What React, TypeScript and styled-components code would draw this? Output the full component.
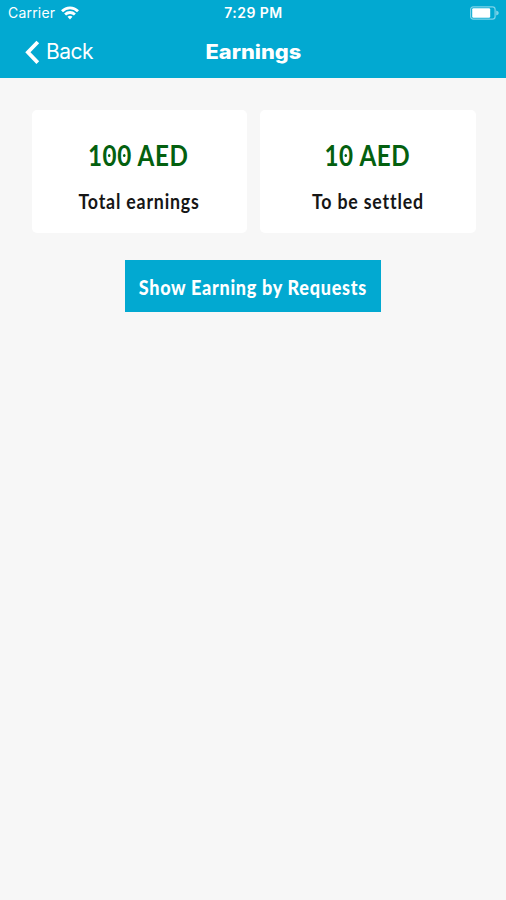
import React from "react";
import styled, { createGlobalStyle } from "styled-components";

const GlobalStyle = createGlobalStyle`
  * { box-sizing: border-box; }
  body { margin: 0; background: #f7f7f7; }
`;

const Screen = styled.div`
  min-height: 900px;
  background: #f7f7f7;
  font-family: Lato, sans-serif;
`;

const Header = styled.header`
  height: 78px;
  background: #02a9d1;
  color: #fff;
  font-family: Inter, sans-serif;
`;

const StatusBar = styled.div`
  display: grid;
  grid-template-columns: 1fr auto 1fr;
  align-items: center;
  height: 26px;
  padding: 0 7px 0 8px;
  font-size: 14px;
  line-height: 26px;
`;

const Carrier = styled.div`
  display: flex;
  align-items: center;
  gap: 6px;
  letter-spacing: 0.2px;
`;

const Clock = styled.div`
  font-weight: 600;
  font-size: 14px;
  letter-spacing: 0.45px;
`;

const BatterySlot = styled.div`
  display: flex;
  justify-content: flex-end;
`;

const NavBar = styled.nav`
  display: grid;
  grid-template-columns: 1fr auto 1fr;
  align-items: center;
  height: 52px;
  padding: 0 25px;
`;

const BackButton = styled.button`
  display: flex;
  align-items: center;
  gap: 6px;
  padding: 0;
  border: 0;
  background: none;
  color: inherit;
  font: 400 21px/52px Inter, sans-serif;
  letter-spacing: -0.5px;
`;

const Title = styled.h1`
  margin: 0;
  font: 800 20px/52px Inter, sans-serif;
  transform: translateX(0.5px) scaleX(1.09);
`;

const Content = styled.main`
  display: flex;
  flex-direction: column;
  align-items: center;
  padding: 32px 30px 0 32px;
`;

const Cards = styled.section`
  display: grid;
  grid-template-columns: 215px 216px;
  gap: 13px;
  align-self: stretch;
`;

const Card = styled.article`
  display: flex;
  flex-direction: column;
  align-items: center;
  height: 123px;
  padding-top: 27px;
  border-radius: 5px;
  background: #fff;
`;

const Amount = styled.div`
  font-size: 29px;
  line-height: 36px;
  font-weight: 700;
  color: #04600f;
  letter-spacing: 0.7px;
  white-space: nowrap;
  transform: translateX(-1px) scaleX(0.835);
`;

const Zero = styled.span`
  position: relative;
  display: inline-block;
  &::after {
    content: "";
    position: absolute;
    left: calc(50% - 2px);
    top: calc(50% - 1px);
    width: 3px;
    height: 3px;
    border-radius: 50%;
    background: #04600f;
  }
`;

const Label = styled.div`
  margin-top: 13px;
  font-size: 20px;
  line-height: 28px;
  font-weight: 700;
  color: #161616;
  letter-spacing: 0.9px;
  white-space: nowrap;
  transform: translateY(0.5px) scaleX(0.89);
`;

const RequestsButton = styled.button`
  display: flex;
  align-items: center;
  justify-content: center;
  width: 256px;
  height: 52px;
  margin: 27px 2px 0 0;
  padding: 0;
  border: 0;
  background: #02a9d1;
  color: #fff;
  font: 900 20px/28px Lato, sans-serif;
  letter-spacing: 0.8px;
  white-space: nowrap;
`;

const ButtonText = styled.span`
  transform: translateY(0.5px) scaleX(0.9);
`;

const WifiIcon = () => (
  <svg width="18" height="14" viewBox="0 0 18 14" fill="none" stroke="#fff" strokeWidth="2.8">
    <path d="M1 5.2C5.5.7 12.5.7 17 5.2" />
    <path d="M4.1 8.5C6.9 5.8 11.1 5.8 13.9 8.5" />
    <path d="M9 13.4 6.5 10.8Q9 8.8 11.5 10.8Z" fill="#fff" stroke="none" />
  </svg>
);

const BatteryIcon = () => (
  <svg width="29" height="14" viewBox="0 0 29 14">
    <rect x="0.6" y="0.8" width="24.5" height="12.4" rx="2.6" fill="none" stroke="#7dd3e9" strokeWidth="1.2" />
    <rect x="2.2" y="2.2" width="18" height="9.6" rx="1.2" fill="#fff" />
    <path d="M26.2 4.5Q28.8 5.3 28.8 7T26.2 9.5Z" fill="#7dd3e9" />
  </svg>
);

const ChevronIcon = () => (
  <svg width="15" height="24" viewBox="0 0 15 24" fill="none" stroke="#fff" strokeWidth="3.8">
    <path d="M12.8 2 2.9 12.3 12.8 22.6" />
  </svg>
);

const earnings = [
  { amount: "100", label: "Total earnings" },
  { amount: "10", label: "To be settled" },
];

export default function App() {
  return (
    <Screen>
      <GlobalStyle />
      <Header>
        <StatusBar>
          <Carrier>Carrier <WifiIcon /></Carrier>
          <Clock>7:29 PM</Clock>
          <BatterySlot><BatteryIcon /></BatterySlot>
        </StatusBar>
        <NavBar>
          <BackButton><ChevronIcon />Back</BackButton>
          <Title>Earnings</Title>
        </NavBar>
      </Header>
      <Content>
        <Cards>
          {earnings.map((item) => (
            <Card key={item.label}>
              <Amount>
                {item.amount.split("").map((digit, i) =>
                  digit === "0" ? <Zero key={i}>0</Zero> : digit
                )}{" "}
                AED
              </Amount>
              <Label>{item.label}</Label>
            </Card>
          ))}
        </Cards>
        <RequestsButton><ButtonText>Show Earning by Requests</ButtonText></RequestsButton>
      </Content>
    </Screen>
  );
}
